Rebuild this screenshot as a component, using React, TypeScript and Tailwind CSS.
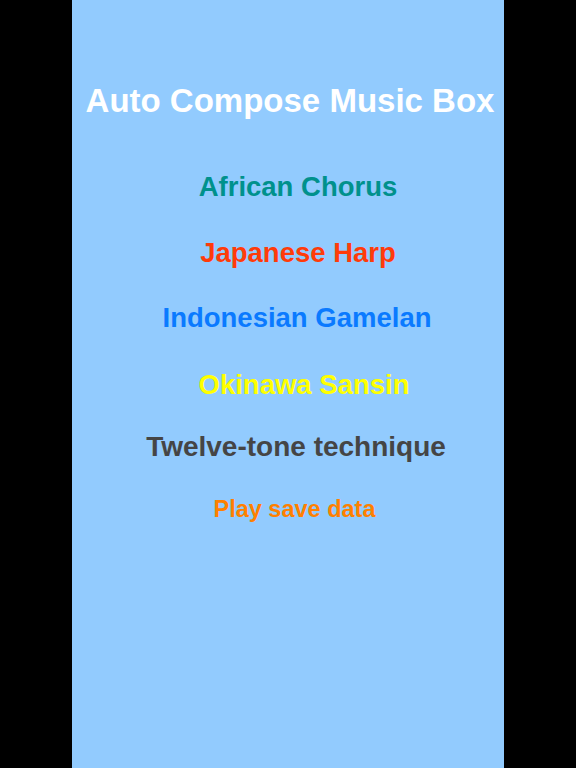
const items = [
  { label: "African Chorus", cls: "mt-[56px] pl-[20px] text-[27.5px] text-[#00918c]" },
  { label: "Japanese Harp", cls: "mt-[38.5px] pl-[20px] text-[27.5px] text-[#ff3b0a]" },
  { label: "Indonesian Gamelan", cls: "mt-[37.5px] pl-[18px] text-[27.5px] text-[#0a7aff]" },
  { label: "Okinawa Sansin", cls: "mt-[39.5px] pl-[32px] text-[27.5px] text-[#ffff00]" },
  { label: "Twelve-tone technique", cls: "mt-[34px] pl-[16px] text-[28px] text-[#454545]" },
  { label: "Play save data", cls: "mt-[37px] pl-[13px] text-[23.5px] text-[#ff8000]" },
];

export default function App() {
  return (
    <div
      className="flex h-[768px] w-[576px] justify-center bg-black"
      style={{ fontFamily: '"Liberation Sans", Arial, sans-serif' }}
    >
      <main className="flex w-[432px] flex-col items-center bg-[#92cbfe] pt-[84px]">
        <h1 className="pl-[4px] text-[33px] font-bold leading-none whitespace-nowrap text-white">
          Auto Compose Music Box
        </h1>
        {items.map((item) => (
          <button
            key={item.label}
            className={`block font-bold leading-none whitespace-nowrap ${item.cls}`}
          >
            {item.label}
          </button>
        ))}
      </main>
    </div>
  );
}
